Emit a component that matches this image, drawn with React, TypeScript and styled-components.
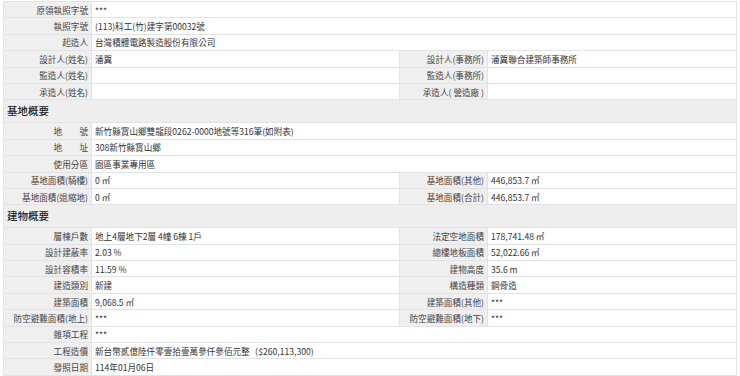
import { Fragment } from "react";
import styled, { createGlobalStyle } from "styled-components";

const GlobalStyle = createGlobalStyle`
  body {
    margin: 0;
    background: #ffffff;
    font-family: "Noto Sans CJK TC", "Noto Sans", sans-serif;
    color: #333333;
  }
`;

const Page = styled.div`
  padding: 1px 3px 0 3px;
`;

const Table = styled.table`
  width: 734px;
  border-collapse: collapse;
  table-layout: fixed;
  font-size: 8.6px;
  line-height: 12px;
`;

const LabelCell = styled.th`
  background: #efefef;
  color: #444444;
  font-weight: 400;
  text-align: right;
  white-space: nowrap;
  padding: 0 3px 0 0;
  height: 15.4px;
  border: 1px solid #e3e3e3;
  vertical-align: middle;
`;

const ValueCell = styled.td`
  background: #ffffff;
  color: #333333;
  padding: 0 0 0 3px;
  height: 15.4px;
  border: 1px solid #e3e3e3;
  white-space: nowrap;
  vertical-align: middle;
`;

const SectionCell = styled.th`
  background: #eeeeee;
  color: #222222;
  font-size: 10.5px;
  font-weight: 500;
  text-align: left;
  padding: 0 0 0 3px;
  height: 22px;
  border: 1px solid #e3e3e3;
`;

type Row = {
  label: string;
  value?: string;
  label2?: string;
  value2?: string;
};

type Section = {
  title?: string;
  rows: Row[];
};

const sections: Section[] = [
  {
    rows: [
      { label: "原領執照字號", value: "***" },
      { label: "執照字號", value: "(113)科工(竹)建字第00032號" },
      { label: "起造人", value: "台灣積體電路製造股份有限公司" },
      { label: "設計人(姓名)", value: "潘冀", label2: "設計人(事務所)", value2: "潘冀聯合建築師事務所" },
      { label: "監造人(姓名)", value: "", label2: "監造人(事務所)", value2: "" },
      { label: "承造人(姓名)", value: "", label2: "承造人( 營造廠 )", value2: "" },
    ],
  },
  {
    title: "基地概要",
    rows: [
      { label: "地　　號", value: "新竹縣寶山鄉雙龍段0262-0000地號等316筆(如附表)" },
      { label: "地　　址", value: "308新竹縣寶山鄉" },
      { label: "使用分區", value: "園區事業專用區" },
      { label: "基地面積(騎樓)", value: "0 ㎡", label2: "基地面積(其他)", value2: "446,853.7 ㎡" },
      { label: "基地面積(退縮地)", value: "0 ㎡", label2: "基地面積(合計)", value2: "446,853.7 ㎡" },
    ],
  },
  {
    title: "建物概要",
    rows: [
      { label: "層棟戶數", value: "地上4層地下2層 4幢 6棟 1戶", label2: "法定空地面積", value2: "178,741.48 ㎡" },
      { label: "設計建蔽率", value: "2.03 %", label2: "總樓地板面積", value2: "52,022.66 ㎡" },
      { label: "設計容積率", value: "11.59 %", label2: "建物高度", value2: "35.6 m" },
      { label: "建造類別", value: "新建", label2: "構造種類", value2: "鋼骨造" },
      { label: "建築面積", value: "9,068.5 ㎡", label2: "建築面積(其他)", value2: "***" },
      { label: "防空避難面積(地上)", value: "***", label2: "防空避難面積(地下)", value2: "***" },
      { label: "雜項工程", value: "***" },
      { label: "工程造價", value: "新台幣貳億陸仟零壹拾壹萬參仟參佰元整（$260,113,300)" },
      { label: "發照日期", value: "114年01月06日" },
    ],
  },
];

function InfoRow({ row }: { row: Row }) {
  const split = row.label2 !== undefined;
  return (
    <tr>
      <LabelCell scope="row">{row.label}</LabelCell>
      {split ? (
        <>
          <ValueCell>{row.value}</ValueCell>
          <LabelCell scope="row">{row.label2}</LabelCell>
          <ValueCell>{row.value2}</ValueCell>
        </>
      ) : (
        <ValueCell colSpan={3}>{row.value}</ValueCell>
      )}
    </tr>
  );
}

export default function App() {
  return (
    <Page>
      <GlobalStyle />
      <Table>
        <colgroup>
          <col style={{ width: 88 }} />
          <col style={{ width: 308 }} />
          <col style={{ width: 88 }} />
          <col />
        </colgroup>
        <tbody>
          {sections.map((section, i) => (
            <Fragment key={i}>
              {section.title && (
                <tr>
                  <SectionCell colSpan={4}>{section.title}</SectionCell>
                </tr>
              )}
              {section.rows.map((row) => (
                <InfoRow key={row.label} row={row} />
              ))}
            </Fragment>
          ))}
        </tbody>
      </Table>
    </Page>
  );
}
